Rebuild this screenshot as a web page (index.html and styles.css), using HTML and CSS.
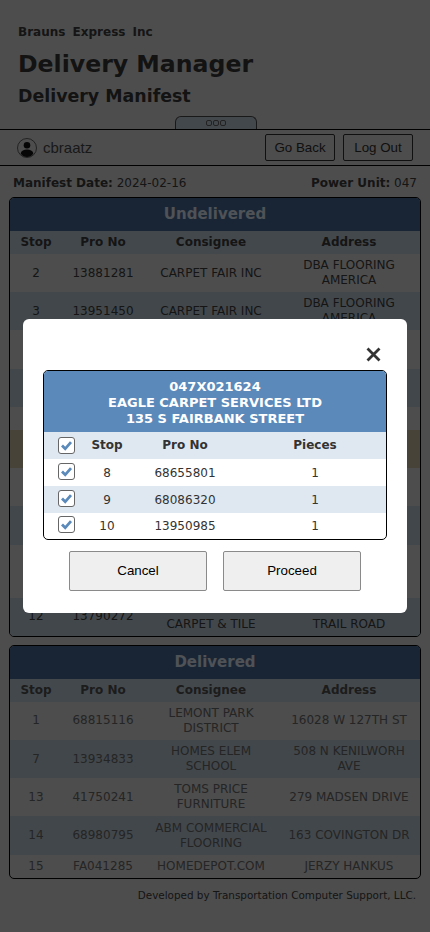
FILE: index.html
```html
<!DOCTYPE html>
<html lang="en">
<head>
<meta charset="utf-8">
<title>Delivery Manifest</title>
<link rel="stylesheet" href="styles.css">
</head>
<body>
<header class="brand">
  <div class="company">Brauns Express Inc</div>
  <h1 class="app-title">Delivery Manager</h1>
  <h2 class="page-title">Delivery Manifest</h2>
  <div class="tab-wrap"><div class="tab"><i></i><i></i><i></i></div></div>
</header>
<nav class="userbar">
  <div class="user">
    <svg class="user-icon" viewBox="0 0 20 20" width="20" height="20">
      <circle cx="10" cy="10" r="9.5" fill="none" stroke="#3a3a3a" stroke-width="0.8"/>
      <circle cx="10" cy="7.2" r="3.3" fill="#111"/>
      <path d="M3.6 15.4C4.4 12.4 6.8 11.4 10 11.4s5.600 1 6.400 4C15 17.800 12.600 18.900 10 18.900S5 17.800 3.600 15.400z" fill="#111"/>
    </svg>
    <span class="username">cbraatz</span>
  </div>
  <div class="nav-buttons">
    <button class="nav-btn">Go Back</button>
    <button class="nav-btn">Log Out</button>
  </div>
</nav>
<div class="meta">
  <span><b>Manifest Date:</b> 2024-02-16</span>
  <span><b>Power Unit:</b> 047</span>
</div>
<section class="panel">
  <div class="panel-title">Undelivered</div>
  <table class="grid">
    <colgroup><col class="c1"><col class="c2"><col class="c3"><col class="c4"></colgroup>
    <thead><tr><th>Stop</th><th>Pro No</th><th>Consignee</th><th>Address</th></tr></thead>
    <tbody>
      <tr><td>2</td><td>13881281</td><td>CARPET FAIR INC</td><td>DBA FLOORING<br>AMERICA</td></tr>
      <tr><td>3</td><td>13951450</td><td>CARPET FAIR INC</td><td>DBA FLOORING<br>AMERICA</td></tr>
      <tr><td>4</td><td>13905512</td><td>FLOOR COVERINGS<br>INTERNATIONAL</td><td>1500 N MAPLE AVE<br>UNIT B</td></tr>
      <tr><td>5</td><td>68412290</td><td>HOMES ELEM<br>SCHOOL</td><td>508 N KENILWORH<br>AVE</td></tr>
      <tr><td>6</td><td>13977024</td><td>HOMEDEPOT.COM</td><td>JERZY HANKUS</td></tr>
      <tr class="flag"><td>8</td><td>68655801</td><td>EAGLE CARPET<br>SERVICES LTD</td><td>135 S FAIRBANK<br>STREET</td></tr>
      <tr><td>9</td><td>68086320</td><td>EAGLE CARPET<br>SERVICES LTD</td><td>135 S FAIRBANK<br>STREET</td></tr>
      <tr><td>10</td><td>13950985</td><td>EAGLE CARPET<br>SERVICES LTD</td><td>135 S FAIRBANK<br>STREET</td></tr>
      <tr><td>11</td><td>41702236</td><td>RELIABLE FLOOR<br>COVERING</td><td>ATTN RECEIVING<br>2240 W HARBOR R<br>SUITE 4</td></tr>
      <tr><td>12</td><td>13790272</td><td>COUNTRY SIDE<br>CARPET &amp; TILE</td><td>1200 WILLOW<br>TRAIL ROAD</td></tr>
    </tbody>
  </table>
</section>
<section class="panel panel-done">
  <div class="panel-title">Delivered</div>
  <table class="grid">
    <colgroup><col class="c1"><col class="c2"><col class="c3"><col class="c4"></colgroup>
    <thead><tr><th>Stop</th><th>Pro No</th><th>Consignee</th><th>Address</th></tr></thead>
    <tbody>
      <tr><td>1</td><td>68815116</td><td>LEMONT PARK<br>DISTRICT</td><td>16028 W 127TH ST</td></tr>
      <tr><td>7</td><td>13934833</td><td>HOMES ELEM<br>SCHOOL</td><td>508 N KENILWORH<br>AVE</td></tr>
      <tr><td>13</td><td>41750241</td><td>TOMS PRICE<br>FURNITURE</td><td>279 MADSEN DRIVE</td></tr>
      <tr><td>14</td><td>68980795</td><td>ABM COMMERCIAL<br>FLOORING</td><td>163 COVINGTON DR</td></tr>
      <tr><td>15</td><td>FA041285</td><td>HOMEDEPOT.COM</td><td>JERZY HANKUS</td></tr>
    </tbody>
  </table>
</section>
<footer class="credit">Developed by Transportation Computer Support, LLC.</footer>

<div class="overlay">
  <div class="modal">
    <div class="modal-close">
      <svg viewBox="0 0 15 15" width="15" height="15"><path d="M1.500 1.500L13.500 13.500M13.500 1.500L1.500 13.500" stroke="#333" stroke-width="2.800" fill="none"/></svg>
    </div>
    <div class="shipment">
      <div class="shipment-head">047X021624<br>EAGLE CARPET SERVICES LTD<br>135 S FAIRBANK STREET</div>
      <table class="picks">
        <colgroup><col class="p1"><col class="p2"><col class="p3"><col class="p4"></colgroup>
        <thead>
          <tr>
            <th><span class="check"><svg viewBox="0 0 17 17" width="17" height="17"><path d="M4 8.600L7.200 11.800L13 5.200" stroke="#5b89ba" stroke-width="2.800" fill="none"/></svg></span></th>
            <th>Stop</th><th>Pro No</th><th>Pieces</th>
          </tr>
        </thead>
        <tbody>
          <tr>
            <td><span class="check"><svg viewBox="0 0 17 17" width="17" height="17"><path d="M4 8.600L7.200 11.800L13 5.200" stroke="#5b89ba" stroke-width="2.800" fill="none"/></svg></span></td>
            <td>8</td><td>68655801</td><td>1</td>
          </tr>
          <tr>
            <td><span class="check"><svg viewBox="0 0 17 17" width="17" height="17"><path d="M4 8.600L7.200 11.800L13 5.200" stroke="#5b89ba" stroke-width="2.800" fill="none"/></svg></span></td>
            <td>9</td><td>68086320</td><td>1</td>
          </tr>
          <tr>
            <td><span class="check"><svg viewBox="0 0 17 17" width="17" height="17"><path d="M4 8.600L7.200 11.800L13 5.200" stroke="#5b89ba" stroke-width="2.800" fill="none"/></svg></span></td>
            <td>10</td><td>13950985</td><td>1</td>
          </tr>
        </tbody>
      </table>
    </div>
    <div class="modal-actions">
      <button class="modal-btn">Cancel</button>
      <button class="modal-btn">Proceed</button>
    </div>
  </div>
</div>
</body>
</html>
```
FILE: styles.css
```css
* { box-sizing: border-box; }
html, body { margin: 0; padding: 0; }
body {
  background: #c0c0c0;
  color: #363636;
  font-family: "DejaVu Sans", Verdana, sans-serif;
  font-size: 12px;
  height: 932px;
  overflow: hidden;
}
.brand { padding: 25px 0 0 18px; }
.company {
  font-size: 12px;
  font-weight: 700;
  line-height: 14px;
  word-spacing: 3px;
}
.app-title {
  margin: 9px 0 0;
  font-size: 23.6px;
  line-height: 32px;
  font-weight: 700;
  color: #303030;
}
.page-title {
  margin: 5px 0 0;
  font-size: 17.4px;
  line-height: 23px;
  font-weight: 700;
  color: #303030;
}
.tab-wrap {
  display: flex;
  justify-content: center;
  margin: 8px 0 0 -16px;
}
.tab {
  width: 82px;
  height: 13px;
  background: #a8b5bf;
  border: 1px solid #404040;
  border-bottom: 0;
  border-radius: 6px 6px 0 0;
  display: flex;
  justify-content: center;
  gap: 1px;
  padding-top: 3px;
}
.tab i {
  width: 6px;
  height: 6px;
  border: 1px solid #555;
  border-radius: 2px;
}
.userbar {
  height: 37px;
  border-top: 1px solid #000;
  border-bottom: 1px solid #000;
  display: flex;
  align-items: center;
  justify-content: space-between;
  padding: 0 17px;
}
.user { display: flex; align-items: center; gap: 6px; }
.user-icon { display: block; }
.username {
  font-family: "Liberation Sans", Arial, sans-serif;
  font-size: 15px;
  color: #404040;
}
.nav-buttons { display: flex; gap: 8px; }
.nav-btn {
  width: 70px;
  height: 27px;
  padding: 0 0 1px;
  background: #c0c0c0;
  border: 1px solid #2a2a2a;
  border-radius: 2px;
  color: #2a2a2a;
  font-family: "Liberation Sans", Arial, sans-serif;
  font-size: 13.33px;
}
.meta {
  display: flex;
  justify-content: space-between;
  padding: 10px 13px 0;
  height: 31px;
  line-height: 15px;
  font-size: 12px;
}
.meta b { font-weight: 700; }
.panel {
  margin: 0 9px 8px;
  border: 1px solid #000;
  border-radius: 5px;
  overflow: hidden;
}
.panel-title {
  height: 33px;
  background: #3f5e86;
  color: #c6ced8;
  font-size: 15px;
  font-weight: 700;
  line-height: 33px;
  text-align: center;
}
.grid {
  width: 100%;
  border-collapse: collapse;
  table-layout: fixed;
}
.c1 { width: 52px; }
.c2 { width: 82px; }
.c3 { width: 134px; }
.grid th {
  height: 23px;
  padding: 0;
  background: #a8b5bf;
  font-size: 12px;
  font-weight: 700;
  line-height: 15px;
}
.grid td {
  padding: 4.1px 0;
  line-height: 15px;
  font-size: 12px;
  text-align: center;
  color: #363636;
}
.grid tbody tr:nth-child(even) { background: #a5b2bb; }
.grid tbody tr.flag { background: #b2a78f; }
.panel-done .grid td { color: #5c5c5c; }
.panel-done .grid th { color: #484848; }
.credit {
  margin-top: 10px;
  padding-right: 14px;
  font-size: 10.4px;
  line-height: 13px;
  text-align: right;
  color: #363636;
}
.overlay {
  position: fixed;
  inset: 0;
  background: rgba(0, 0, 0, 0.6);
  display: flex;
  align-items: center;
  justify-content: center;
}
.modal {
  width: 384px;
  height: 294px;
  background: #fff;
  border-radius: 6px;
  padding: 28px 20px 0;
}
.modal-close {
  display: flex;
  justify-content: flex-end;
  padding-right: 6px;
  height: 23px;
}
.modal-close svg { display: block; }
.shipment {
  border: 1px solid #000;
  border-radius: 5px;
  overflow: hidden;
  color: #333;
}
.shipment-head {
  height: 61px;
  padding-top: 8px;
  background: #5b89ba;
  color: #fff;
  font-size: 13px;
  font-weight: 700;
  line-height: 16px;
  text-align: center;
}
.picks {
  width: 100%;
  border-collapse: collapse;
  table-layout: fixed;
}
.p1 { width: 44px; }
.p2 { width: 38px; }
.p3 { width: 118px; }
.picks th, .picks td {
  height: 27px;
  padding: 0;
  font-size: 12px;
  line-height: 15px;
  text-align: center;
}
.picks td { padding-top: 1px; }
.picks tbody tr:last-child td { height: 26px; }
.picks th { font-weight: 700; }
.picks thead tr, .picks tbody tr:nth-child(even) { background: #dfe8f1; }
.check {
  display: block;
  width: 17px;
  height: 17px;
  margin: 0 0 1px 14px;
  background: #fff;
  border: 1px solid #666;
  border-radius: 3px;
  overflow: hidden;
}
.picks td .check { margin-bottom: 4px; }
.check svg { display: block; margin: -1px; }
.modal-actions {
  display: flex;
  justify-content: center;
  gap: 16px;
  margin-top: 11px;
}
.modal-btn {
  width: 138px;
  height: 40px;
  padding: 0 0 2px;
  background: #efefef;
  border: 1px solid #8a8a8a;
  border-radius: 2px;
  color: #000;
  font-family: "Liberation Sans", Arial, sans-serif;
  font-size: 13.33px;
}
```
